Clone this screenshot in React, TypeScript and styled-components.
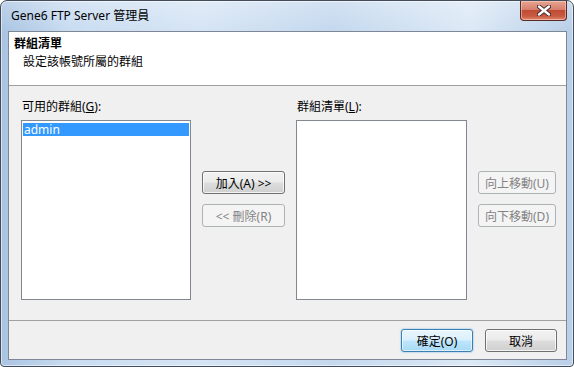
import styled, { createGlobalStyle, css } from 'styled-components';

const GlobalStyle = createGlobalStyle`
  html, body {
    margin: 0;
    padding: 0;
    background: #ffffff;
  }
  body {
    font-family: "Noto Sans", "Noto Sans CJK TC", sans-serif;
    font-size: 12px;
    color: #000;
  }
`;

const FONT = `"Noto Sans", "Noto Sans CJK TC", sans-serif`;

function App() {
  return (
    <>
      <GlobalStyle />
      <Window>
        <TitleBar>
          <Title>Gene6 FTP Server 管理員</Title>
          <CloseButton aria-label="close">
            <svg width="14" height="11" viewBox="0 0 14 11">
              <path
                d="M2 1.5 L12 9.5 M12 1.5 L2 9.5"
                stroke="#3b2a2a"
                strokeWidth="4.2"
                strokeLinecap="round"
                fill="none"
              />
              <path
                d="M2 1.5 L12 9.5 M12 1.5 L2 9.5"
                stroke="#ffffff"
                strokeWidth="2.4"
                strokeLinecap="round"
                fill="none"
              />
            </svg>
          </CloseButton>
        </TitleBar>

        <Client>
          <Header>
            <HeaderTitle>群組清單</HeaderTitle>
            <HeaderSub>設定該帳號所屬的群組</HeaderSub>
          </Header>

          <Body>
            <ListColumn>
              <Label>可用的群組(<u>G</u>):</Label>
              <ListBox width={170}>
                <ListItem selected>admin</ListItem>
              </ListBox>
            </ListColumn>

            <ButtonStack width={83}>
              <Button>加入(A) &gt;&gt;</Button>
              <Button disabled>&lt;&lt; 刪除(R)</Button>
            </ButtonStack>

            <ListColumn>
              <Label>群組清單(<u>L</u>):</Label>
              <ListBox width={171} />
            </ListColumn>

            <ButtonStack width={78}>
              <Button disabled>向上移動(U)</Button>
              <Button disabled>向下移動(D)</Button>
            </ButtonStack>
          </Body>

          <Footer>
            <Button primary width={72}>確定(O)</Button>
            <Button width={72}>取消</Button>
          </Footer>
        </Client>
      </Window>
    </>
  );
}

const Window = styled.div`
  width: 574px;
  height: 367px;
  box-sizing: border-box;
  border: 1px solid #434c58;
  border-radius: 7px 7px 4px 4px;
  background:
    linear-gradient(180deg, rgba(255, 255, 255, 0.25) 0px, rgba(255, 255, 255, 0) 30px),
    linear-gradient(90deg, #a9c4e2 0%, #c9dcf1 12%, #d6e5f5 35%, #c4d8ee 58%, #dce9f6 82%, #b8cfe8 100%);
  box-shadow: inset 0 0 0 1px rgba(255, 255, 255, 0.55);
  display: flex;
  flex-direction: column;
  padding: 0 6px 6px 7px;
  overflow: hidden;
`;

const TitleBar = styled.div`
  height: 30px;
  display: flex;
  align-items: flex-start;
  justify-content: space-between;
`;

const Title = styled.div`
  margin: 7px 0 0 3px;
  font-family: ${FONT};
  font-size: 12px;
  line-height: 16px;
  color: #000;
`;

const CloseButton = styled.div`
  width: 47px;
  height: 20px;
  box-sizing: border-box;
  border: 1px solid #5a2a26;
  border-top: none;
  border-radius: 0 0 4px 4px;
  background: linear-gradient(180deg, #e8a493 0%, #d77f6c 45%, #c14b33 50%, #c85b42 80%, #e08a70 100%);
  box-shadow: inset 0 0 0 1px rgba(255, 220, 210, 0.5);
  display: flex;
  align-items: center;
  justify-content: center;
`;

const Client = styled.div`
  flex: 1;
  border: 1px solid #7d8796;
  background: #f0f0f0;
  display: flex;
  flex-direction: column;
  min-height: 0;
`;

const Header = styled.div`
  height: 54px;
  background: #ffffff;
  border-bottom: 1px solid #a0a0a0;
  padding: 4px 0 0 5px;
  box-sizing: border-box;
`;

const HeaderTitle = styled.div`
  font-family: ${FONT};
  font-weight: bold;
  font-size: 12px;
  line-height: 16px;
`;

const HeaderSub = styled.div`
  font-family: ${FONT};
  font-size: 12px;
  line-height: 16px;
  margin: 2px 0 0 9px;
`;

const Body = styled.div`
  flex: 1;
  display: flex;
  align-items: flex-start;
  gap: 11px;
  padding: 13px 10px 0 12px;
`;

const ListColumn = styled.div`
  display: flex;
  flex-direction: column;
`;

const Label = styled.div`
  font-family: ${FONT};
  font-size: 12px;
  line-height: 16px;
  height: 16px;
  margin: 0 0 5px 1px;
  white-space: nowrap;

  u {
    text-decoration: underline;
    text-underline-offset: 1px;
  }
`;

const ListBox = styled.div<{ width: number }>`
  width: ${(p) => p.width}px;
  height: 180px;
  box-sizing: border-box;
  border: 1px solid #828790;
  background: #ffffff;
  padding: 2px 1px;
`;

const ListItem = styled.div<{ selected?: boolean }>`
  height: 13px;
  line-height: 13px;
  padding-left: 1px;
  font-family: ${FONT};
  font-size: 12px;
  ${(p) =>
    p.selected &&
    css`
      background: #3399ff;
      color: #ffffff;
    `}
`;

const ButtonStack = styled.div<{ width: number }>`
  width: ${(p) => p.width}px;
  display: flex;
  flex-direction: column;
  gap: 10px;
  margin-top: 72px;
`;

const Footer = styled.div`
  height: 39px;
  box-sizing: border-box;
  border-top: 1px solid #a0a0a0;
  display: flex;
  justify-content: flex-end;
  gap: 12px;
  padding: 8px 9px 0 0;
`;

const Button = styled.div<{ disabled?: boolean; primary?: boolean; width?: number }>`
  ${(p) => (p.width ? `width: ${p.width}px;` : '')}
  height: 23px;
  box-sizing: border-box;
  border: 1px solid #707070;
  border-radius: 3px;
  background: linear-gradient(180deg, #f2f2f2 0%, #ebebeb 48%, #dddddd 52%, #cfcfcf 100%);
  box-shadow: inset 0 0 0 1px rgba(255, 255, 255, 0.75);
  font-family: ${FONT};
  font-size: 12px;
  color: #000;
  display: flex;
  align-items: center;
  justify-content: center;
  white-space: nowrap;

  ${(p) =>
    p.primary &&
    css`
      border-color: #3c7fb1;
      background: linear-gradient(180deg, #eaf6fd 0%, #d9f0fc 48%, #bee6fd 52%, #a7d9f5 100%);
      box-shadow: inset 0 0 0 1px rgba(255, 255, 255, 0.6), 0 0 1px 1px rgba(120, 190, 240, 0.35);
    `}

  ${(p) =>
    p.disabled &&
    css`
      border-color: #adb2b5;
      background: #f4f4f4;
      box-shadow: none;
      color: #838383;
    `}
`;

export default App;
